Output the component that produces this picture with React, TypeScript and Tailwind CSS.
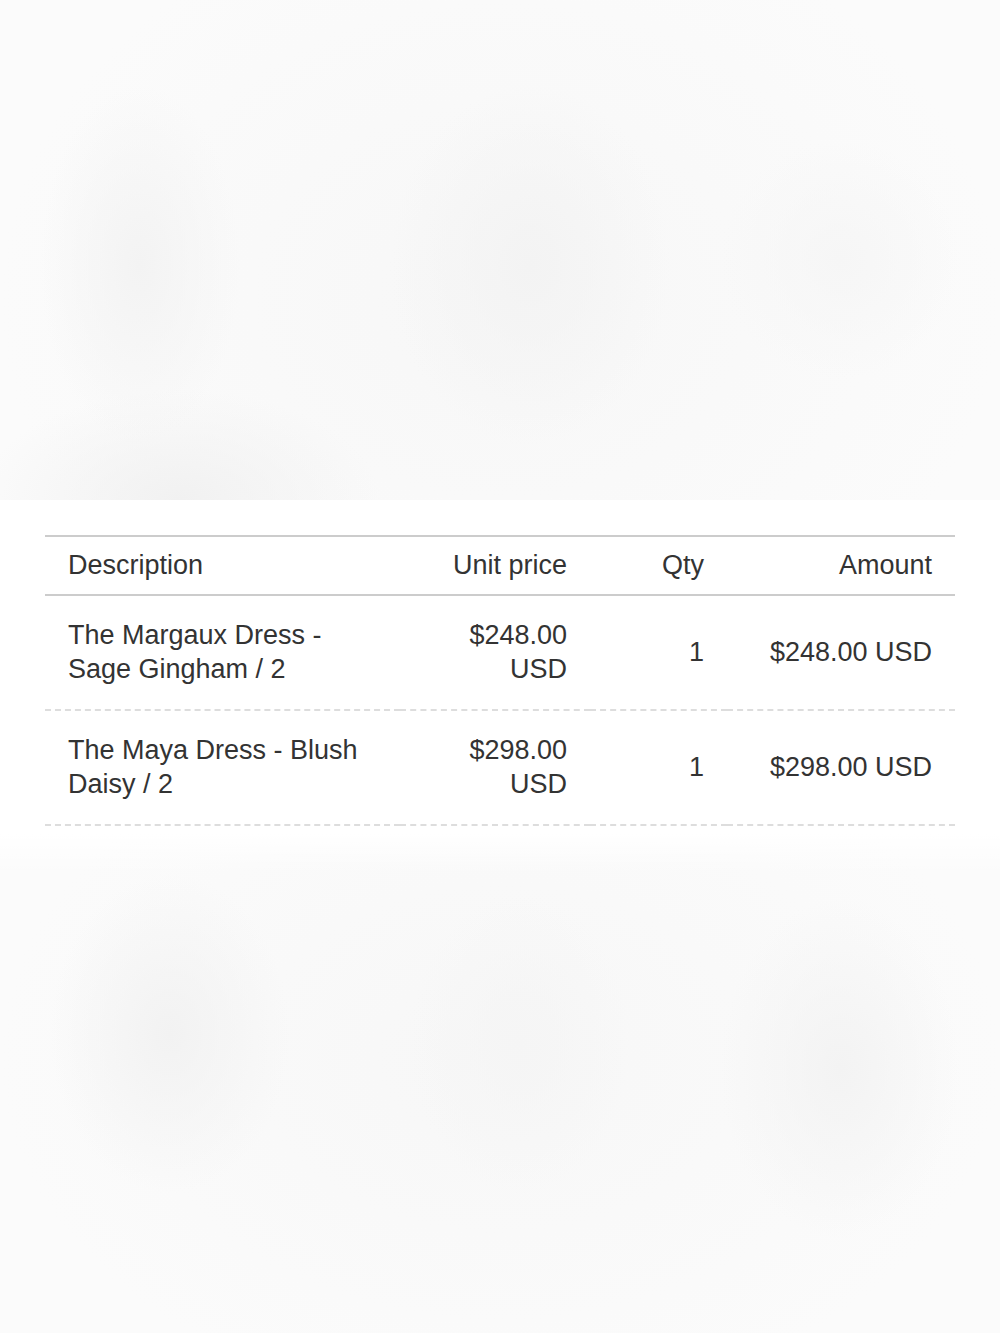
import React from "react";

const rows = [
  { desc: ["The Margaux Dress -", "Sage Gingham / 2"], unit: ["$248.00", "USD"], qty: "1", amount: "$248.00 USD" },
  { desc: ["The Maya Dress - Blush", "Daisy / 2"], unit: ["$298.00", "USD"], qty: "1", amount: "$298.00 USD" },
];

export default function App() {
  return (
    <div className="w-[1000px] h-[1333px] flex flex-col bg-white text-[#333333] font-['Liberation_Sans','Helvetica',sans-serif]">
      <div className="h-[500px] shrink-0 bg-[#fbfbfb] bg-[radial-gradient(ellipse_100px_180px_at_14%_53%,#f3f3f3,transparent),radial-gradient(ellipse_140px_180px_at_53%_53%,#f3f3f3,transparent),radial-gradient(ellipse_120px_120px_at_84%_52%,#f6f6f6,transparent),radial-gradient(ellipse_200px_110px_at_18%_100%,#f1f1f1,transparent),radial-gradient(ellipse_500px_400px_at_50%_60%,#f7f7f7,transparent)]" />
      <div className="shrink-0 bg-white pt-[35px] pb-[8px] px-[45px]">
        <div className="grid grid-cols-[355px_190px_137px_228px] text-[27px]">
          <div className="border-t-2 border-b-2 border-[#cccccc] py-[12px] px-[23px] leading-[33px]">Description</div>
          <div className="border-t-2 border-b-2 border-[#cccccc] py-[12px] px-[23px] leading-[33px] text-right">Unit price</div>
          <div className="border-t-2 border-b-2 border-[#cccccc] py-[12px] px-[23px] leading-[33px] text-right">Qty</div>
          <div className="border-t-2 border-b-2 border-[#cccccc] py-[12px] px-[23px] leading-[33px] text-right">Amount</div>
          {rows.map((r, i) => (
            <React.Fragment key={i}>
              <div className="border-b-2 border-dashed border-[#dddddd] pt-[22px] pb-[23px] px-[23px] leading-[34px]">
                {r.desc[0]}
                <br />
                {r.desc[1]}
              </div>
              <div className="border-b-2 border-dashed border-[#dddddd] pt-[22px] pb-[23px] px-[23px] leading-[34px] text-right">
                {r.unit[0]}
                <br />
                {r.unit[1]}
              </div>
              <div className="border-b-2 border-dashed border-[#dddddd] pt-[22px] pb-[23px] px-[23px] leading-[34px] text-right flex items-center justify-end">
                {r.qty}
              </div>
              <div className="border-b-2 border-dashed border-[#dddddd] pt-[22px] pb-[23px] px-[23px] leading-[34px] text-right flex items-center justify-end">
                {r.amount}
              </div>
            </React.Fragment>
          ))}
        </div>
      </div>
      <div className="flex-1 bg-[#fbfbfb] bg-[linear-gradient(to_bottom,#ffffff,transparent_40px),radial-gradient(ellipse_120px_160px_at_17%_40%,#f2f2f2,transparent),radial-gradient(ellipse_110px_150px_at_52%_42%,#f5f5f5,transparent),radial-gradient(ellipse_120px_170px_at_84%_47%,#f3f3f3,transparent),radial-gradient(ellipse_500px_350px_at_50%_45%,#f7f7f7,transparent)]" />
    </div>
  );
}
